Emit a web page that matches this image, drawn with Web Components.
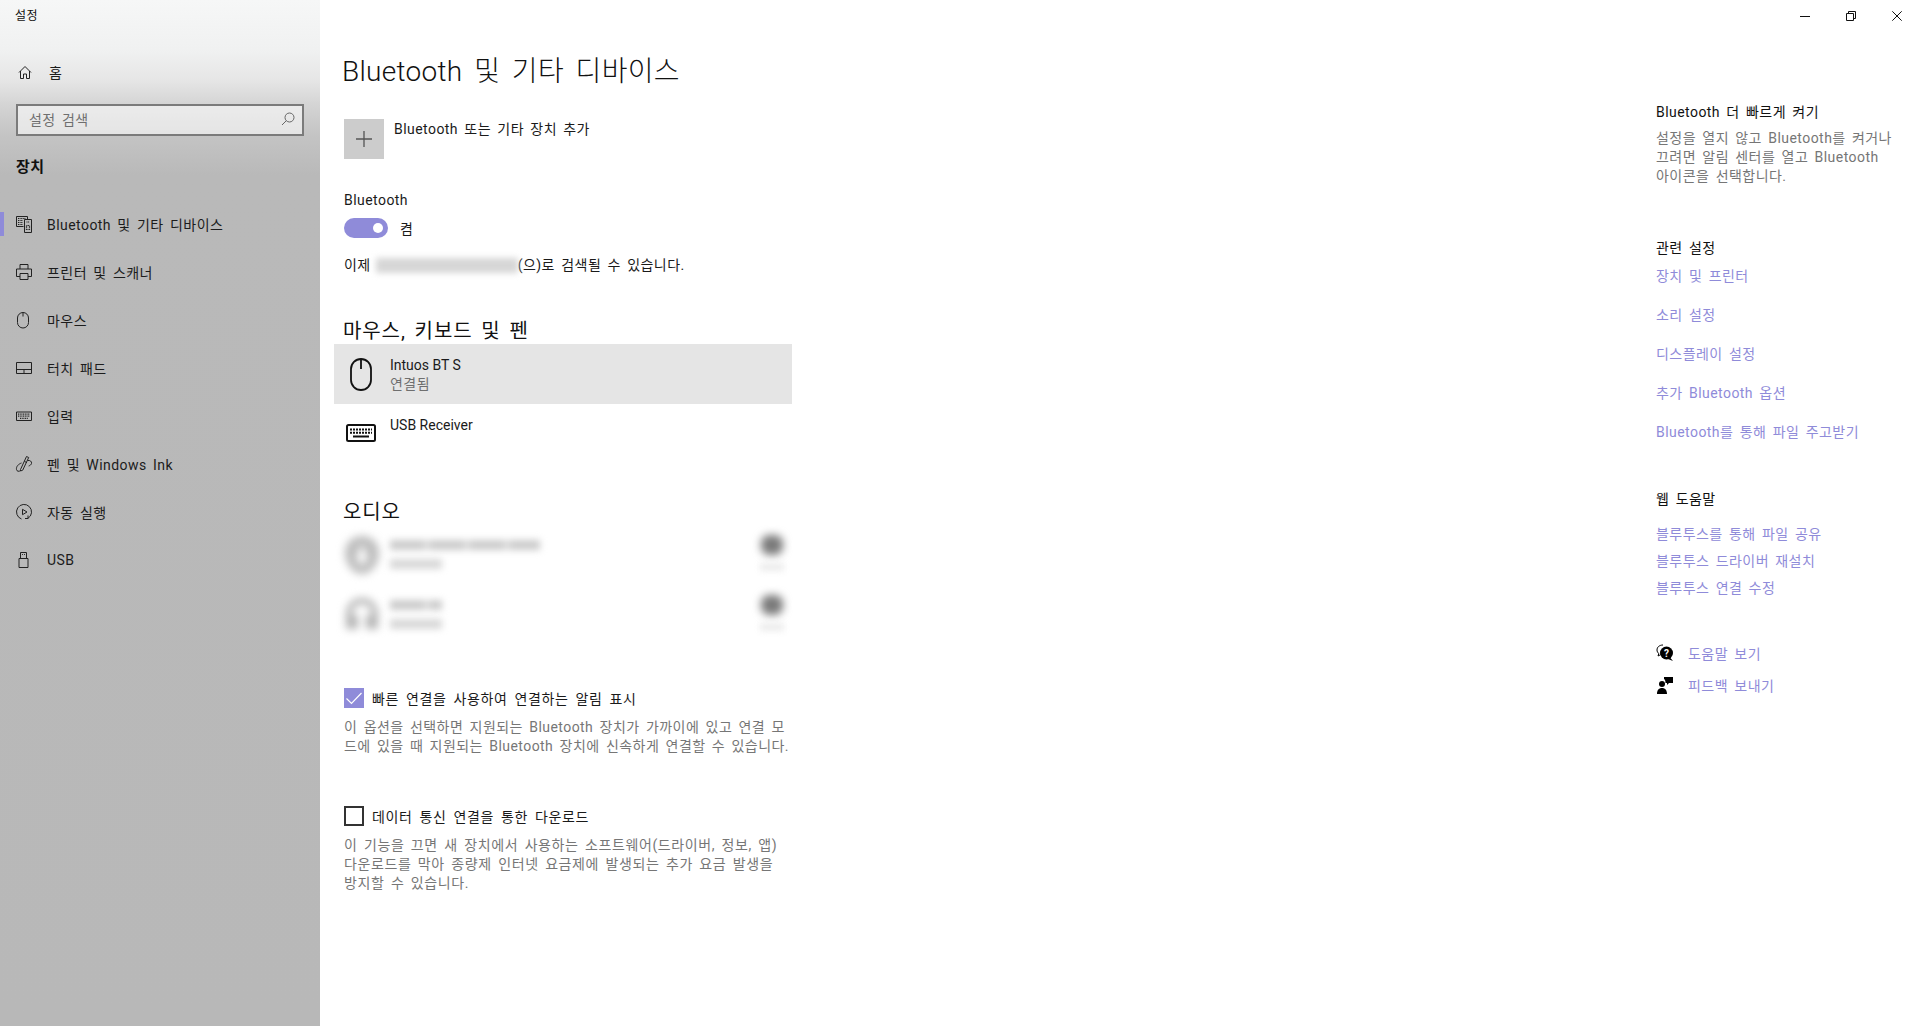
<!DOCTYPE html>
<html lang="ko">
<head>
<meta charset="utf-8">
<title>설정</title>
<style>
    html, body { margin: 0; height: 100%; }
    body {
        font-family: Roboto, "Noto Sans CJK KR", sans-serif;
        font-size: 14px;
        letter-spacing: 0.45px;
        word-spacing: 2.4px;
        color: #1a1a1a;
        background: #fff;
        overflow: hidden;
    }
</style>
</head>
<body>
<settings-app>
    <settings-sidebar slot="sidebar">
        <nav-item slot="home" label="홈" plain>
            <svg viewBox="0 0 16 16"><path d="M3 8.500 9 2.500l6 6M4.500 7v7.500h3V10h3v4.500h3V7"/></svg>
        </nav-item>
        <nav-item label="Bluetooth 및 기타 디바이스" active>
            <svg viewBox="0 0 16 16"><path d="M7.500 10.500H.5V.5h11v2.500M8.500 3.500h7v13h-7z"/><path d="M2 2.500h8M2 4.500h5M2 6.500h5M2 8.500h5M10.500 6h3M10.500 9.500h3v4h-3z" stroke-width="1.200" stroke-dasharray="1 .6"/></svg>
        </nav-item>
        <nav-item label="프린터 및 스캐너">
            <svg viewBox="0 0 16 16"><path d="M4 5V.5h8V5M4 12.500H.5V5h15v7.500H12M4 9.500h8v6H4z"/></svg>
        </nav-item>
        <nav-item label="마우스">
            <svg viewBox="0 0 16 16"><path d="M1.500 6a5.500 5.500 0 0 1 11 0v4.500a5.500 5.500 0 0 1-11 0zM7 .5v4"/></svg>
        </nav-item>
        <nav-item label="터치 패드">
            <svg viewBox="0 0 16 16"><path d="M.5 2.500h15v11H.5zM.5 9.500h15M8 9.500v4"/></svg>
        </nav-item>
        <nav-item label="입력">
            <svg viewBox="0 0 16 16"><path d="M.5 4h15v8.500H.5z"/><path d="M2 6.200h12M2 8.200h12M4 10.300h8" stroke-width="1.300" stroke-dasharray="1 .7"/></svg>
        </nav-item>
        <nav-item label="펜 및 Windows Ink">
            <svg viewBox="0 0 16 16"><path d="M4.500 13.500 10.500.5l2.200 1-6 12.700-2.200.8zM8.500 5.500l2.500 1.100M11.500 4.500c2.500-.5 4.500 1 4 3-.3 1.200-1.500 2-2.800 2.500M5.500 7C2.500 8 0 10.500.5 13.500c.3 2 2.500 2.300 4 1"/></svg>
        </nav-item>
        <nav-item label="자동 실행">
            <svg viewBox="0 0 16 16"><path d="M5.500 15A7.500 7.500 0 1 1 12 14.300M12 11.500v3h-3M6.500 5.300v5.400L11 8z"/></svg>
        </nav-item>
        <nav-item label="USB">
            <svg viewBox="0 0 16 16"><path d="M3 6.500h9v9H3zM4.500 6.500V.5h6v6M6 2.500h.9M8.100 2.500h.9"/></svg>
        </nav-item>
    </settings-sidebar>

    <settings-page slot="page">
        <add-device>Bluetooth 또는 기타 장치 추가</add-device>
        <bt-toggle></bt-toggle>
        <section-head style="--gap: 42px">마우스, 키보드 및 펜</section-head>
        <device-row name="Intuos BT S" status="연결됨" selected>
            <svg width="22" height="33" viewBox="0 0 22 33" fill="none" stroke="#111" stroke-width="1.800"><path d="M1 11a10 10 0 0 1 20 0v11a10 10 0 0 1-20 0zM11 1v10"/></svg>
        </device-row>
        <device-row name="USB Receiver">
            <svg style="margin-bottom:2px" width="30" height="18" viewBox="0 0 30 18" fill="none" stroke="#111"><rect x="1" y="1" width="28" height="16" rx="1.500" stroke-width="2"/><path d="M4 5.500h22M4 8.800h22" stroke-width="2" stroke-dasharray="2 1"/><path d="M7 12.500h16" stroke-width="2"/></svg>
        </device-row>
        <section-head style="--gap: 34px">오디오</section-head>
        <blurred-device wide>
            <svg width="36" height="40" viewBox="0 0 36 40"><path d="M18 1C8 1 1 8 1 18s7 21 17 21 17-11 17-21S28 1 18 1zm0 8 6 14-6 8-6-8z" fill="#bdbdbd"/></svg>
        </blurred-device>
        <blurred-device>
            <svg width="36" height="40" viewBox="0 0 36 40"><path d="M18 3C8 3 2 10 2 20v14h12V20H8c0-7 4-11 10-11s10 4 10 11h-6v14h12V20C34 10 28 3 18 3z" fill="#b4b4b4"/></svg>
        </blurred-device>
        <check-option checked style="--gap: 43px" label="빠른 연결을 사용하여 연결하는 알림 표시">이 옵션을 선택하면 지원되는 Bluetooth 장치가 가까이에 있고 연결 모<br>드에 있을 때 지원되는 Bluetooth 장치에 신속하게 연결할 수 있습니다.</check-option>
        <check-option style="--gap: 50px; letter-spacing: 0.6px" label="데이터 통신 연결을 통한 다운로드">이 기능을 끄면 새 장치에서 사용하는 소프트웨어(드라이버, 정보, 앱)<br>다운로드를 막아 종량제 인터넷 요금제에 발생되는 추가 요금 발생을<br>방지할 수 있습니다.</check-option>
    </settings-page>

    <window-controls slot="controls"></window-controls>

    <settings-aside slot="aside">
        <aside-section heading="Bluetooth 더 빠르게 켜기" style="--gap: 102px">
            <p class="note" style="margin:7px 0 0;line-height:19px;color:#767676;width:250px;white-space:nowrap">설정을 열지 않고 Bluetooth를 켜거나<br>끄려면 알림 센터를 열고 Bluetooth<br>아이콘을 선택합니다.</p>
        </aside-section>
        <aside-section heading="관련 설정" style="--gap: 52px">
            <link-list step="39" first="8">
                <a>장치 및 프린터</a><a>소리 설정</a><a>디스플레이 설정</a><a>추가 Bluetooth 옵션</a><a>Bluetooth를 통해 파일 주고받기</a>
            </link-list>
        </aside-section>
        <aside-section heading="웹 도움말" style="--gap: 47px">
            <link-list step="27" first="15">
                <a>블루투스를 통해 파일 공유</a><a>블루투스 드라이버 재설치</a><a>블루투스 연결 수정</a>
            </link-list>
        </aside-section>
        <help-link style="--gap: 45px" label="도움말 보기">
            <svg width="18" height="18" viewBox="0 0 18 18"><path d="M7 1C3.500 1 1 3 1 6c0 1.500.7 2.700 1.800 3.600L2 12l2.800-1.400" fill="none" stroke="#000"/><circle cx="10.500" cy="9" r="6.500"/><path d="M14 13.500 17 17l-5-2z"/><text x="10.500" y="12.500" text-anchor="middle" font-size="10" font-weight="700" fill="#fff" font-family="Roboto" letter-spacing="0">?</text></svg>
        </help-link>
        <help-link style="--gap: 12px" label="피드백 보내기">
            <svg width="18" height="18" viewBox="0 0 18 18"><circle cx="6" cy="8" r="3"/><path d="M1 18c0-4 2-6 5-6s5 2 5 6zM8 1h9v6h-4l-2 2V7H9.500C9.500 5 9 3.500 8 3z"/></svg>
        </help-link>
    </settings-aside>
</settings-app>

<script>
class SettingsApp extends HTMLElement {
    constructor() {
        super()
        this.attachShadow({ mode: 'open' })
        this.shadowRoot.innerHTML = `
            <style>
                :host { display: flex; width: 1920px; height: 1026px; }
                .right { flex: 1; display: flex; min-width: 0; }
                .middle { flex: 1; min-width: 0; }
                .end { width: 264px; display: flex; flex-direction: column; }
            </style>
            <slot name="sidebar"></slot>
            <div class="right">
                <div class="middle"><slot name="page"></slot></div>
                <div class="end">
                    <slot name="controls"></slot>
                    <slot name="aside"></slot>
                </div>
            </div>
        `
    }
}

class SettingsSidebar extends HTMLElement {
    constructor() {
        super()
        this.attachShadow({ mode: 'open' })
        this.shadowRoot.innerHTML = `
            <style>
                :host {
                    display: block;
                    width: 320px;
                    flex: none;
                    box-sizing: border-box;
                    background: linear-gradient(#f6f7f7 0, #f0f1f1 50px, #e6e6e6 80px, #d4d4d4 105px, #c4c4c4 135px, #b9b9b9 175px, #b8b8b8 100%);
                }
                .title { font-size: 12px; line-height: 16px; padding: 8px 0 0 15px; color: #111; }
                .home { margin-top: 36px; }
                .search {
                    margin: 20px 16px 0;
                    height: 32px;
                    box-sizing: border-box;
                    border: 2px solid #7b7b7b;
                    background: rgba(255,255,255,0.55);
                    display: flex;
                    align-items: center;
                    justify-content: space-between;
                    padding: 0 7px 2px 11px;
                    color: #6f6f6f;
                }
                .search svg { width: 14px; height: 14px; fill: none; stroke: #666; }
                h2 { margin: 20px 0 0 16px; font-size: 15px; line-height: 22px; font-weight: 700; color: #111; }
                .items { margin-top: 22px; }
            </style>
            <div class="title">설정</div>
            <div class="home"><slot name="home"></slot></div>
            <div class="search"><span>설정 검색</span><svg viewBox="0 0 14 14"><circle cx="8.500" cy="5.500" r="4.500"/><path d="M5.300 8.700 1 13"/></svg></div>
            <h2>장치</h2>
            <div class="items"><slot></slot></div>
        `
    }
}

class NavItem extends HTMLElement {
    constructor() {
        super()
        this.attachShadow({ mode: 'open' })
        this.shadowRoot.innerHTML = `
            <style>
                :host { display: flex; align-items: center; height: 48px; position: relative; color: #1c1c1c; }
                :host([plain]) { height: 24px; }
                :host([plain]) .label { margin-left: 17px; }
                :host([active])::before {
                    content: '';
                    position: absolute;
                    left: 0; top: 12px;
                    width: 4px; height: 24px;
                    background: #8f8bd9;
                }
                .icon { width: 16px; height: 16px; margin-left: 16px; display: flex; }
                ::slotted(svg) { width: 16px; height: 16px; fill: none; stroke: #222; stroke-width: 1; overflow: visible; }
                .label { margin-left: 15px; white-space: nowrap; }
            </style>
            <span class="icon"><slot></slot></span>
            <span class="label"></span>
        `
    }

    connectedCallback() {
        this.shadowRoot.querySelector('.label').textContent = this.getAttribute('label')
    }
}

class SettingsPage extends HTMLElement {
    constructor() {
        super()
        this.attachShadow({ mode: 'open' })
        this.shadowRoot.innerHTML = `
            <style>
                :host { display: block; padding-left: 24px; width: 458px; }
                h1 { margin: 52px 0 -1px -2px; font-size: 28px; line-height: 40px; font-weight: 300; color: #111; white-space: nowrap; letter-spacing: 0.3px; word-spacing: 4.5px; }
            </style>
            <h1>Bluetooth 및 기타 디바이스</h1>
            <slot></slot>
        `
    }
}

class AddDevice extends HTMLElement {
    constructor() {
        super()
        this.attachShadow({ mode: 'open' })
        this.shadowRoot.innerHTML = `
            <style>
                :host { display: flex; margin-top: 28px; gap: 10px; }
                .tile { width: 40px; height: 40px; background: #ccc; display: flex; align-items: center; justify-content: center; }
                svg { width: 16px; height: 16px; stroke: #555; stroke-width: 1.300; }
                .text { line-height: 20px; }
            </style>
            <div class="tile"><svg viewBox="0 0 16 16"><path d="M8 0v16M0 8h16"/></svg></div>
            <div class="text"><slot></slot></div>
        `
    }
}

class BtToggle extends HTMLElement {
    constructor() {
        super()
        this.attachShadow({ mode: 'open' })
        this.shadowRoot.innerHTML = `
            <style>
                :host { display: block; margin-top: 31px; }
                .label, .line { line-height: 20px; }
                .row { display: flex; align-items: center; margin-top: 8px; height: 20px; }
                .switch { width: 44px; height: 20px; border-radius: 10px; background: #8f8bd9; position: relative; }
                .switch::after {
                    content: '';
                    position: absolute;
                    right: 5px; top: 5px;
                    width: 10px; height: 10px;
                    border-radius: 50%;
                    background: #fff;
                }
                .state { margin-left: 12px; }
                .line { margin-top: 17px; display: flex; white-space: nowrap; }
                .name { width: 142px; height: 15px; margin: 3px 0 0 5px; background: #d6d6d6; filter: blur(3px); }
            </style>
            <div class="label">Bluetooth</div>
            <div class="row"><div class="switch"></div><span class="state">켬</span></div>
            <div class="line"><span>이제</span><div class="name"></div><span>(으)로 검색될 수 있습니다.</span></div>
        `
    }
}

class SectionHead extends HTMLElement {
    constructor() {
        super()
        this.attachShadow({ mode: 'open' })
        this.shadowRoot.innerHTML = `
            <style>
                :host { display: block; margin: var(--gap) 0 0 -1px; height: 27px; font-size: 20px; line-height: 28px; color: #111; letter-spacing: 0.9px; word-spacing: 3px; }
            </style>
            <slot></slot>
        `
    }
}

class DeviceRow extends HTMLElement {
    constructor() {
        super()
        this.attachShadow({ mode: 'open' })
        this.shadowRoot.innerHTML = `
            <style>
                :host { display: flex; width: 458px; height: 60px; margin-left: -10px; }
                :host([selected]) { background: #e5e5e5; }
                .icon { width: 56px; flex: none; display: flex; justify-content: center; align-items: center; box-sizing: border-box; padding-right: 2px; }
                .text { line-height: 19px; padding-top: 12px; }
                .name { letter-spacing: 0; word-spacing: 0; }
                .status { color: #6f6f6f; }
            </style>
            <div class="icon"><slot></slot></div>
            <div class="text"><div class="name"></div><div class="status"></div></div>
        `
    }

    connectedCallback() {
        this.shadowRoot.querySelector('.name').textContent = this.getAttribute('name')
        this.shadowRoot.querySelector('.status').textContent = this.getAttribute('status') || ''
    }
}

// 원본에서 가려진 오디오 장치 행
class BlurredDevice extends HTMLElement {
    constructor() {
        super()
        this.attachShadow({ mode: 'open' })
        this.shadowRoot.innerHTML = `
            <style>
                :host { display: flex; width: 458px; height: 60px; margin-left: -10px; }
                .icon { width: 36px; height: 40px; margin: 10px 0 0 10px; filter: blur(4px); flex: none; }
                .text { margin: 15px 0 0 10px; flex: 1; }
                .bar { height: 10px; background: repeating-linear-gradient(90deg, #cbcbcb 0 34px, #dedede 34px 40px); filter: blur(3.5px); width: 52px; }
                :host([wide]) .bar:first-child { width: 150px; }
                .bar + .bar { margin-top: 9px; background: #d8d8d8; }
                .side { width: 24px; margin: 10px 8px 0 0; }
                .dot { height: 20px; width: 22px; margin: 0 auto; border-radius: 40%; background: #7a7a7a; filter: blur(4px); }
                .sub { height: 8px; margin-top: 8px; background: #ececec; filter: blur(3px); }
            </style>
            <div class="icon"><slot></slot></div>
            <div class="text"><div class="bar"></div><div class="bar"></div></div>
            <div class="side"><div class="dot"></div><div class="sub"></div></div>
        `
    }
}

class CheckOption extends HTMLElement {
    constructor() {
        super()
        this.attachShadow({ mode: 'open' })
        this.shadowRoot.innerHTML = `
            <style>
                :host { display: block; margin-top: var(--gap); }
                .row { display: flex; align-items: center; height: 20px; }
                .box { width: 20px; height: 20px; box-sizing: border-box; border: 2px solid #333; margin-right: 8px; flex: none; }
                :host([checked]) .box { background: #8f8bd9; border: 0; }
                svg { display: none; width: 20px; height: 20px; fill: none; stroke: #fff; stroke-width: 1.200; }
                :host([checked]) svg { display: block; }
                .label { letter-spacing: 0.6px; word-spacing: 3px; }
                .desc { margin-top: 10px; line-height: 19px; color: #767676; white-space: nowrap; }
            </style>
            <div class="row">
                <div class="box"><svg viewBox="0 0 20 20"><path d="M2.500 10.500 7.500 15.500 17.500 5"/></svg></div>
                <span class="label"></span>
            </div>
            <div class="desc"><slot></slot></div>
        `
    }

    connectedCallback() {
        this.shadowRoot.querySelector('.label').textContent = this.getAttribute('label')
    }
}

class WindowControls extends HTMLElement {
    constructor() {
        super()
        this.attachShadow({ mode: 'open' })
        this.shadowRoot.innerHTML = `
            <style>
                :host { display: flex; height: 32px; justify-content: flex-end; }
                div { width: 46px; display: flex; align-items: center; justify-content: center; }
                svg { width: 10px; height: 10px; fill: none; stroke: #111; stroke-width: 1; }
            </style>
            <div><svg viewBox="0 0 10 10"><path d="M0 5.500h10"/></svg></div>
            <div><svg viewBox="0 0 10 10"><path d="M.5 2.500h7v7h-7zM2.500 2.500V.5h7v7h-2"/></svg></div>
            <div><svg viewBox="0 0 10 10"><path d="M.3.300 9.700 9.700M9.700.300.3 9.700"/></svg></div>
        `
    }
}

class SettingsAside extends HTMLElement {
    constructor() {
        super()
        this.attachShadow({ mode: 'open' })
        this.shadowRoot.innerHTML = `
            <style>
                :host { display: block; margin-top: -32px; }
            </style>
            <slot></slot>
        `
    }
}

class AsideSection extends HTMLElement {
    constructor() {
        super()
        this.attachShadow({ mode: 'open' })
        this.shadowRoot.innerHTML = `
            <style>
                :host { display: block; margin-top: var(--gap); }
                .head { line-height: 20px; color: #111; white-space: nowrap; }
            </style>
            <div class="head"></div>
            <slot></slot>
        `
    }

    connectedCallback() {
        this.shadowRoot.querySelector('.head').textContent = this.getAttribute('heading')
    }
}

class LinkList extends HTMLElement {
    constructor() {
        super()
        this.attachShadow({ mode: 'open' })
        this.shadowRoot.innerHTML = `
            <style>
                :host { display: flex; flex-direction: column; color: #8f8bd9; line-height: 20px; white-space: nowrap; }
            </style>
            <slot></slot>
        `
    }

    connectedCallback() {
        this.style.marginTop = this.getAttribute('first') + 'px'
        this.style.gap = (this.getAttribute('step') - 20) + 'px'
    }
}

class HelpLink extends HTMLElement {
    constructor() {
        super()
        this.attachShadow({ mode: 'open' })
        this.shadowRoot.innerHTML = `
            <style>
                :host { display: flex; align-items: center; margin-top: var(--gap); height: 20px; color: #8f8bd9; }
                .icon { width: 32px; flex: none; display: flex; align-items: center; }
            </style>
            <span class="icon"><slot></slot></span>
            <span class="label"></span>
        `
    }

    connectedCallback() {
        this.shadowRoot.querySelector('.label').textContent = this.getAttribute('label')
    }
}

customElements.define('settings-app', SettingsApp)
customElements.define('settings-sidebar', SettingsSidebar)
customElements.define('nav-item', NavItem)
customElements.define('settings-page', SettingsPage)
customElements.define('add-device', AddDevice)
customElements.define('bt-toggle', BtToggle)
customElements.define('section-head', SectionHead)
customElements.define('device-row', DeviceRow)
customElements.define('blurred-device', BlurredDevice)
customElements.define('check-option', CheckOption)
customElements.define('window-controls', WindowControls)
customElements.define('settings-aside', SettingsAside)
customElements.define('aside-section', AsideSection)
customElements.define('link-list', LinkList)
customElements.define('help-link', HelpLink)
</script>
</body>
</html>
